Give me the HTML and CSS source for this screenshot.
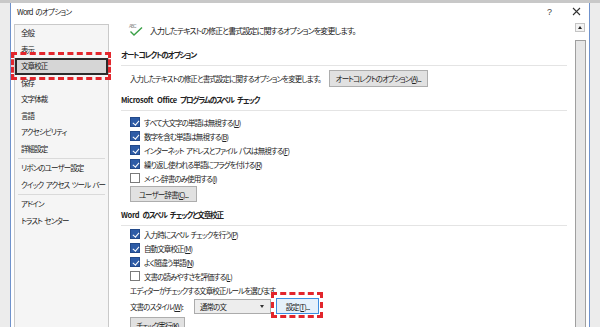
FILE: index.html
```html
<!DOCTYPE html>
<html lang="ja">

<head>
    <meta charset="UTF-8">
    <meta name="viewport" content="width=device-width, initial-scale=1.0">
    <title>Word のオプション</title>
    <link rel="stylesheet" href="styles.css">
</head>

<body>
    <div class="dialog">
        <!--タイトルバー-->
        <div class="titlebar">
            <span class="title">Word のオプション</span>
            <span class="help">?</span>
            <svg class="close" width="9" height="9" viewBox="0 0 9 9">
                <path d="M1 1 L8 8 M8 1 L1 8" stroke="#333" stroke-width="1.1" fill="none" />
            </svg>
        </div>

        <div class="main">
            <!--左のメニュー-->
            <ul class="nav">
                <li>全般</li>
                <li>表示</li>
                <li class="active">文章校正</li>
                <li>保存</li>
                <li>文字体裁</li>
                <li>言語</li>
                <li>アクセシビリティ</li>
                <li>詳細設定</li>
                <li class="sep"></li>
                <li>リボンのユーザー設定</li>
                <li>クイック アクセス ツール バー</li>
                <li class="sep"></li>
                <li>アドイン</li>
                <li>トラスト センター</li>
            </ul>

            <!--右の設定-->
            <div class="content">
                <div class="lead">
                    <svg class="lead-icon" width="16" height="14" viewBox="0 0 16 14">
                        <text x="1" y="4.5" font-size="4.5" fill="#8a8a8a" font-family="Liberation Sans">ABC</text>
                        <path d="M2.5 8.5 L6 12 L14 4.5" stroke="#3aa047" stroke-width="1.4" fill="none" />
                    </svg>
                    <span>入力したテキストの修正と書式設定に関するオプションを変更します。</span>
                </div>

                <h2>オートコレクトのオプション</h2>
                <div class="row autocorrect">
                    <span>入力したテキストの修正と書式設定に関するオプションを変更します。</span>
                    <span class="btn btn-ac">オートコレクトのオプション(<u>A</u>)...</span>
                </div>

                <h2 class="sec"><span class="en">Microsoft Office</span> プログラムのスペル チェック</h2>
                <div class="opts first">
                    <div class="row opt"><span class="check on"></span>すべて大文字の単語は無視する(<u>U</u>)</div>
                    <div class="row opt"><span class="check on"></span>数字を含む単語は無視する(<u>B</u>)</div>
                    <div class="row opt"><span class="check on"></span>インターネット アドレスとファイル パスは無視する(<u>F</u>)</div>
                    <div class="row opt"><span class="check on"></span>繰り返し使われる単語にフラグを付ける(<u>R</u>)</div>
                    <div class="row opt"><span class="check"></span>メイン辞書のみ使用する(<u>I</u>)</div>
                </div>
                <div class="row">
                    <span class="btn btn-dict">ユーザー辞書(<u>C</u>)...</span>
                </div>

                <h2 class="sec"><span class="en">Word</span> のスペル チェックと文章校正</h2>
                <div class="opts">
                    <div class="row opt"><span class="check on"></span>入力時にスペル チェックを行う(<u>P</u>)</div>
                    <div class="row opt"><span class="check on"></span>自動文章校正(<u>M</u>)</div>
                    <div class="row opt"><span class="check on"></span>よく間違う単語(<u>N</u>)</div>
                    <div class="row opt"><span class="check"></span>文書の読みやすさを評価する(<u>L</u>)</div>
                    <div class="row opt">エディターがチェックする文章校正ルールを選びます</div>
                </div>
                <div class="row style-row">
                    <span>文書のスタイル(<u>W</u>):</span>
                    <span class="select">通常の文<span class="arrow"></span></span>
                    <span class="btn btn-set">設定(<u>T</u>)...</span>
                </div>
                <div class="row run-row">
                    <span class="btn btn-run">チェック実行(<u>K</u>)</span>
                </div>
            </div>

            <!--スクロールバー-->
            <div class="scrollbar">
                <div class="sb-up"><span></span></div>
                <div class="sb-thumb"></div>
            </div>
        </div>
    </div>
</body>

</html>
```

FILE: styles.css
```css
html,
body {
    height: 100%;
}

body {
    margin: 0;
    overflow: hidden;
    background: linear-gradient(#c8c8c8 0 3px, #ececec 3px);
    font-family: "Noto Sans CJK JP", "Noto Sans", sans-serif;
    font-size: 7.5px;
    letter-spacing: -0.9px;
    word-spacing: 1.5px;
    font-feature-settings: "palt";
    color: #222;
}

.dialog {
    margin: 3px 0 0 10px;
    width: 578px;
    height: 324px;
    background-color: #fff;
    border-left: 1px solid #6f92cc;
    border-right: 1px solid #6f92cc;
    display: flex;
    flex-direction: column;
}

/*タイトルバー*/
.titlebar {
    height: 17px;
    flex: none;
    display: flex;
    align-items: center;
    padding: 0 8px 0 6px;
}

.title {
    letter-spacing: -0.7px;
}

.help {
    margin-left: auto;
    margin-right: 20px;
    font-size: 9px;
    letter-spacing: 0;
    font-family: "Liberation Sans", sans-serif;
    color: #444;
}

.main {
    flex: 1;
    display: flex;
    min-height: 0;
}

/*左のメニュー*/
.nav {
    list-style: none;
    margin: 4px 0 0 3px;
    padding: 0;
    width: 95px;
    box-sizing: border-box;
    border: 1px solid #c9c9c9;
    border-bottom: none;
    background-color: #f5f5f5;
    flex: none;
}

.nav li {
    height: 16.5px;
    line-height: 16.5px;
    padding-left: 6px;
    white-space: nowrap;
}

.nav li.sep {
    height: 1px;
    margin: 1px 3px;
    padding: 0;
    background-color: #dadada;
}

.nav li.active {
    position: relative;
    box-sizing: border-box;
    border: 2px solid #2b2b2b;
    background-color: #d6d6d6;
    line-height: 12.5px;
    padding-left: 4px;
}

/*赤い点線の枠*/
.nav li.active::after,
.btn-set::after {
    content: "";
    position: absolute;
    border: 3px dashed #e2262c;
}

.nav li.active::after {
    top: -8px;
    left: -6px;
    right: -5px;
    bottom: -7px;
}

/*右の設定*/
.content {
    flex: 1;
    min-width: 0;
    padding: 0 8px 0 12px;
    display: flex;
    flex-direction: column;
}

.content > * {
    flex-shrink: 0;
}

.lead {
    height: 20px;
    display: flex;
    align-items: center;
    padding-left: 7px;
    font-size: 8px;
    white-space: nowrap;
}

.lead-icon {
    margin-right: 6px;
}

h2 {
    margin: 8px 0 0;
    height: 14px;
    line-height: 14px;
    padding-bottom: 3px;
    border-bottom: 1px solid #e4e4e4;
    font-size: 7.5px;
    font-weight: bold;
    letter-spacing: -1.1px;
    word-spacing: 2.5px;
    white-space: nowrap;
}

h2 .en {
    letter-spacing: -0.3px;
}

h2.sec {
    margin-top: 6px;
}

.row {
    display: flex;
    align-items: center;
    padding-left: 9px;
    white-space: nowrap;
}

.autocorrect {
    margin-top: 4px;
    height: 17px;
    gap: 8px;
}

.opts {
    margin: 1px 0 1px;
}

.opts.first {
    margin-top: 4px;
}

.opt {
    height: 14px;
}

.check {
    width: 10px;
    height: 10px;
    box-sizing: border-box;
    border: 1px solid #7a7a7a;
    background-color: #fff;
    margin-right: 4px;
    flex: none;
    position: relative;
}

.check.on {
    border-color: #22498a;
    background-color: #2d5ba6;
}

/*チェックマーク*/
.check.on::after {
    content: "";
    position: absolute;
    left: 2.5px;
    top: 0.5px;
    width: 2.5px;
    height: 5px;
    border: solid #fff;
    border-width: 0 1.3px 1.3px 0;
    transform: rotate(40deg);
}

.btn {
    height: 16px;
    box-sizing: border-box;
    padding: 0 4px;
    border: 1px solid #adadad;
    background-color: #e1e1e1;
    display: inline-flex;
    align-items: center;
    justify-content: center;
    flex: none;
}

.btn-ac {
    min-width: 99px;
    height: 17px;
}

.btn-dict {
    min-width: 67px;
}

.btn-set {
    position: relative;
    min-width: 43px;
    margin-left: 5px;
    border-color: #3c8ee0;
    background-color: #e5f1fb;
}

.btn-set::after {
    top: -7px;
    left: -6px;
    right: -5px;
    bottom: -5px;
}

.btn-run {
    min-width: 55px;
}

.style-row {
    height: 16px;
}

.select {
    position: relative;
    margin-left: 11px;
    width: 77px;
    height: 15px;
    box-sizing: border-box;
    border: 1px solid #ababab;
    background-color: #ededed;
    display: flex;
    align-items: center;
    padding-left: 5px;
}

.arrow {
    position: absolute;
    right: 6px;
    top: 5px;
    border-left: 2.5px solid transparent;
    border-right: 2.5px solid transparent;
    border-top: 3px solid #333;
}

.run-row {
    margin-top: 3px;
}

/*スクロールバー*/
.scrollbar {
    width: 11px;
    margin-right: 3px;
    flex: none;
    display: flex;
    flex-direction: column;
    padding-top: 3px;
}

.sb-up {
    height: 9px;
    width: 10px;
    box-sizing: border-box;
    border: 1px solid #c4c4c4;
    background-color: #f3f3f3;
    display: flex;
    align-items: center;
    justify-content: center;
}

.sb-up span {
    border-left: 2.5px solid transparent;
    border-right: 2.5px solid transparent;
    border-bottom: 3px solid #222;
}

.sb-thumb {
    flex: 1;
    margin-top: 8px;
    border: 1px solid #9f9f9f;
    border-bottom: none;
    background-color: #e6e6e6;
}
```
